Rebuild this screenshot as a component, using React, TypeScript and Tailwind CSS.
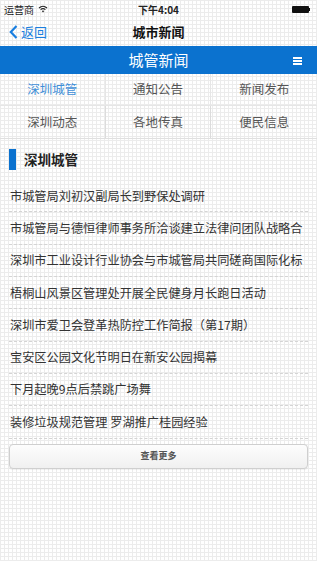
import { useState } from "react";

const tabs = ["深圳城管", "通知公告", "新闻发布", "深圳动态", "各地传真", "便民信息"];

const news = [
    "市城管局刘初汉副局长到野保处调研",
    "市城管局与德恒律师事务所洽谈建立法律问团队战略合",
    "深圳市工业设计行业协会与市城管局共同磋商国际化标",
    "梧桐山风景区管理处开展全民健身月长跑日活动",
    "深圳市爱卫会登革热防控工作简报（第17期）",
    "宝安区公园文化节明日在新安公园揭幕",
    "下月起晚9点后禁跳广场舞",
    "装修垃圾规范管理 罗湖推广桂园经验",
];

function App() {
    const [activeTab, setActiveTab] = useState("深圳城管");

    return (
        <div className="w-[317px] h-[561px] overflow-hidden bg-white bg-[linear-gradient(#ececec_1px,transparent_1px),linear-gradient(90deg,#ececec_1px,transparent_1px)] bg-[size:4px_4px] font-['Noto_Sans_CJK_SC','Noto_Sans',sans-serif] text-[#333]">
            {/* status bar */}
            <div className="relative h-[18px] flex items-center justify-between px-[4px] text-[10px] text-[#222]">
                <div className="flex items-center gap-[4px]">
                    <span>运营商</span>
                    <svg width="10" height="8" viewBox="0 0 10 8">
                        <path d="M1 3 Q5 -0.5 9 3" stroke="#222" strokeWidth="1.2" fill="none" />
                        <path d="M2.6 4.6 Q5 2.6 7.4 4.6" stroke="#222" strokeWidth="1.2" fill="none" />
                        <path d="M5 7.5 L3.8 6 Q5 5 6.2 6 Z" fill="#222" />
                    </svg>
                </div>
                <span className="absolute left-0 right-0 text-center font-semibold">下午4:04</span>
                <div className="flex items-center mr-[3px]">
                    <div className="w-[17px] h-[7px] bg-[#111] rounded-[1px]" />
                    <div className="w-[1.5px] h-[3px] bg-[#111]" />
                </div>
            </div>

            {/* nav bar */}
            <div className="relative h-[28px] flex items-center">
                <div className="flex items-center gap-[3px] pl-[9px] text-[#1a7fe0] text-[13px]">
                    <svg width="9" height="14" viewBox="0 0 9 14">
                        <path d="M7.5 1 L1.8 7 L7.5 13" stroke="#1a7fe0" strokeWidth="2.2" fill="none" />
                    </svg>
                    <span>返回</span>
                </div>
                <span className="absolute left-0 right-0 text-center text-[13px] font-bold text-[#111] pointer-events-none">城市新闻</span>
            </div>

            {/* blue header */}
            <div className="relative h-[28px] bg-[#0b72cf] flex items-center justify-center text-white text-[15px]">
                <span>城管新闻</span>
                <div className="absolute right-[15px] top-[11px] flex flex-col gap-[1.5px]">
                    <div className="w-[9px] h-[1.5px] bg-white" />
                    <div className="w-[9px] h-[1.5px] bg-white" />
                    <div className="w-[9px] h-[1.5px] bg-white" />
                </div>
            </div>

            {/* tabs */}
            <div className="grid grid-cols-3 border-b border-[#e0e0e0]">
                {tabs.map((t, i) => (
                    <button
                        key={t}
                        onClick={() => setActiveTab(t)}
                        className={`h-[32px] flex items-center justify-center text-[12.5px] ${i % 3 !== 2 ? "border-r border-[#dcdcdc]" : ""} ${i < 3 ? "border-b border-[#e6e6e6]" : ""} ${activeTab === t ? "text-[#3f8fd8]" : "text-[#555]"}`}
                    >
                        {t}
                    </button>
                ))}
            </div>

            {/* section title */}
            <div className="flex items-center gap-[8px] pl-[9px] mt-[9px] h-[22px]">
                <div className="w-[7px] h-[21px] bg-[#0b72cf]" />
                <span className="text-[13.5px] font-bold text-[#222]">{activeTab}</span>
            </div>

            {/* list */}
            <div className="flex flex-col px-[9px] mt-[10px]">
                {news.map((n) => (
                    <div
                        key={n}
                        className="h-[32.33px] flex items-center border-b border-dashed border-[#d4d4d4] text-[12.2px] text-[#333] whitespace-nowrap pl-[1px]"
                    >
                        {n}
                    </div>
                ))}
                <button className="mt-[5px] h-[25px] rounded-[4px] border border-[#cfcfcf] bg-[linear-gradient(#fdfdfd,#f0f0f0)] shadow-[0_1px_1px_rgba(0,0,0,0.06)] text-[9px] font-semibold text-[#555]">
                    查看更多
                </button>
            </div>
        </div>
    );
}

export default App;
